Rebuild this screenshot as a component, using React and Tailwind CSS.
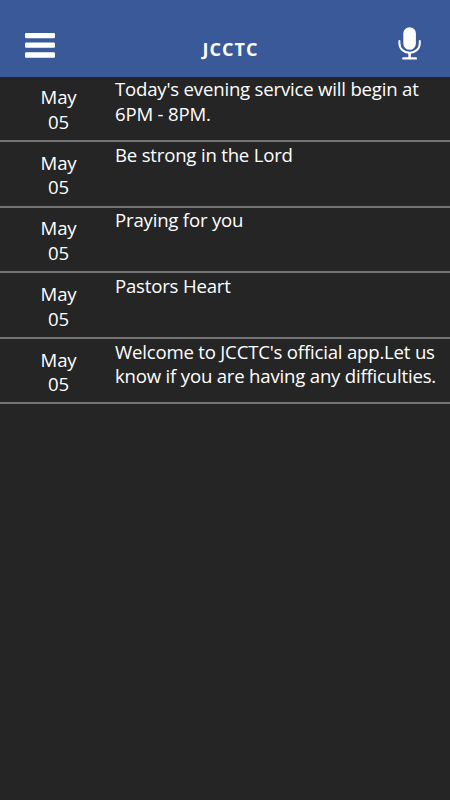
import React from 'react';

const MESSAGES = [
  { month: 'May', day: '05', lines: ["Today's evening service will begin at", '6PM - 8PM.'] },
  { month: 'May', day: '05', lines: ['Be strong in the Lord'] },
  { month: 'May', day: '05', lines: ['Praying for you'] },
  { month: 'May', day: '05', lines: ['Pastors Heart'] },
  { month: 'May', day: '05', lines: ["Welcome to JCCTC's official app.Let us", 'know if you are having any difficulties.'] },
];

const MenuIcon = () => (
  <svg className="w-[30px] h-[25px]" viewBox="0 0 30 25" fill="currentColor">
    <rect x="0" y="0" width="30" height="5.2" rx="1.2" />
    <rect x="0" y="9.4" width="30" height="5.4" rx="1.2" />
    <rect x="0" y="19.3" width="30" height="5.4" rx="1.2" />
  </svg>
);

const MicIcon = () => (
  <svg className="w-[24px] h-[33px]" viewBox="0 0 24 33" fill="none" stroke="currentColor">
    <rect x="5.3" y="0.2" width="12.6" height="22.6" rx="6.3" fill="currentColor" stroke="none" />
    <path d="M1.4 14v2.2c0 5.6 4.4 9.6 10.2 9.6s10.2-4 10.2-9.6v-2.2" strokeWidth="2" strokeLinecap="round" />
    <path d="M11.6 25.8v5.6" strokeWidth="2.6" />
    <path d="M5.4 31.4h12.4" strokeWidth="2.4" strokeLinecap="round" />
  </svg>
);

const MessageRow = ({ message }) => (
  <li className="flex h-[65.6px] border-b-2 border-[#747474] pt-[0.9px] text-[18.6px] leading-[24.6px] tracking-[-0.2px] first:h-[65px] first:pt-[0.2px]">
    <div className="w-[115px] pt-[8px] pl-[2px] text-center">
      <p>{message.month}</p>
      <p>{message.day}</p>
    </div>
    <div className="flex-1 whitespace-nowrap">
      {message.lines.map((line) => (
        <p key={line}>{line}</p>
      ))}
    </div>
  </li>
);

export default function App() {
  return (
    <div className="h-[800px] w-[450px] overflow-hidden bg-[#252525] font-['Open_Sans',sans-serif] text-white">
      <header className="flex h-[77px] items-start justify-between bg-[#3a5998] pl-[25px] pr-[28px]">
        <button className="mt-[33px]" aria-label="Menu">
          <MenuIcon />
        </button>
        <h1 className="mt-[36px] ml-[8px] text-[18px] leading-[26px] font-bold tracking-[1px]">JCCTC</h1>
        <button className="mt-[27px]" aria-label="Record">
          <MicIcon />
        </button>
      </header>
      <ul>
        {MESSAGES.map((message, index) => (
          <MessageRow key={index} message={message} />
        ))}
      </ul>
    </div>
  );
}
